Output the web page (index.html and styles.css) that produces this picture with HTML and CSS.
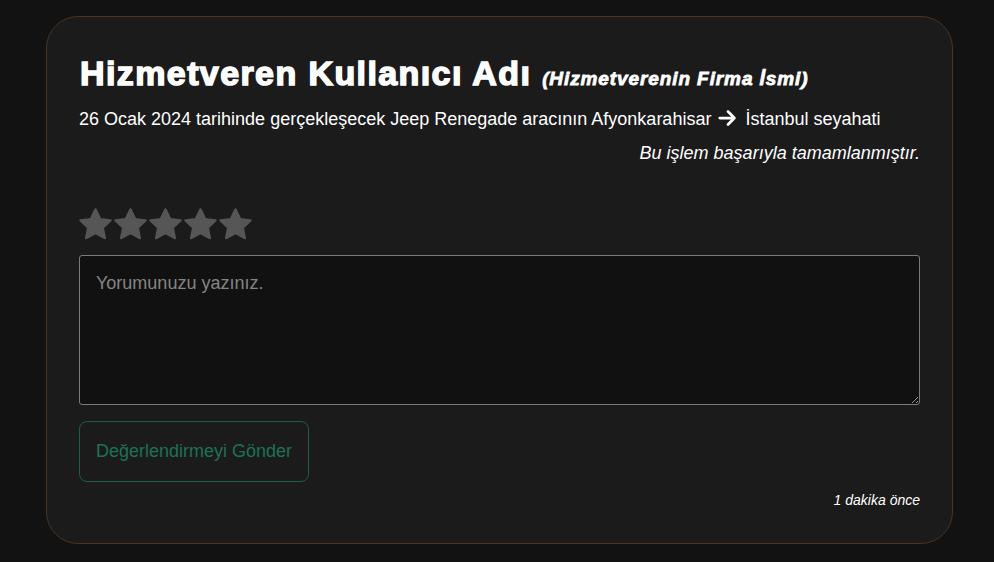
FILE: index.html
```html
<!DOCTYPE html>
<html lang="tr">
<head>
<meta charset="utf-8">
<link rel="stylesheet" href="styles.css">
</head>
<body>
<div class="card">
  <h1 class="title">Hizmetveren Kullanıcı Adı <span class="firm">(Hizmetverenin Firma İsmi)</span></h1>
  <p class="trip">26 Ocak 2024 tarihinde gerçekleşecek Jeep Renegade aracının Afyonkarahisar <svg class="arrow" viewBox="0 0 24 24" width="24" height="22"><path d="M3 12h16M12 5l7 7-7 7" fill="none" stroke="#fff" stroke-width="3" stroke-linecap="round" stroke-linejoin="round"/></svg> İstanbul seyahati</p>
  <p class="status">Bu işlem başarıyla tamamlanmıştır.</p>
  <div class="stars">
    <svg viewBox="1.5 1.5 21 21"><path d="M12 2.5l2.9 6.1 6.6.8-4.9 4.6 1.3 6.6L12 17.3l-5.9 3.3 1.3-6.6-4.9-4.6 6.6-.8z"/></svg>
    <svg viewBox="1.5 1.5 21 21"><path d="M12 2.5l2.9 6.1 6.6.8-4.9 4.6 1.3 6.6L12 17.3l-5.9 3.3 1.3-6.6-4.9-4.6 6.6-.8z"/></svg>
    <svg viewBox="1.5 1.5 21 21"><path d="M12 2.5l2.9 6.1 6.6.8-4.9 4.6 1.3 6.6L12 17.3l-5.9 3.3 1.3-6.6-4.9-4.6 6.6-.8z"/></svg>
    <svg viewBox="1.5 1.5 21 21"><path d="M12 2.5l2.9 6.1 6.6.8-4.9 4.6 1.3 6.6L12 17.3l-5.9 3.3 1.3-6.6-4.9-4.6 6.6-.8z"/></svg>
    <svg viewBox="1.5 1.5 21 21"><path d="M12 2.5l2.9 6.1 6.6.8-4.9 4.6 1.3 6.6L12 17.3l-5.9 3.3 1.3-6.6-4.9-4.6 6.6-.8z"/></svg>
  </div>
  <textarea class="comment" placeholder="Yorumunuzu yazınız."></textarea>
  <button class="send">Değerlendirmeyi Gönder</button>
  <p class="time">1 dakika önce</p>
</div>
</body>
</html>
```
FILE: styles.css
```css
html, body {
  margin: 0;
  padding: 0;
  background: #121212;
  font-family: "Liberation Sans", Arial, sans-serif;
  color: #fff;
}
body {
  padding: 16px 41px 18px 46px;
}
.card {
  background: #1b1b1b;
  border: 1px solid #4a3320;
  border-radius: 32px;
  padding: 34px 32px 34px 32px;
  display: flex;
  flex-direction: column;
}
.title {
  margin: 0 0 0 1px;
  font-size: 34px;
  font-weight: bold;
  -webkit-text-stroke: 1.5px #fff;
  letter-spacing: 1.4px;
  line-height: 44px;
}
.firm {
  font-size: 19px;
  font-style: italic;
  -webkit-text-stroke: 0.8px #fff;
  letter-spacing: 0.9px;
}
.trip {
  margin: 6px 0 0;
  font-size: 18px;
  line-height: 24px;
}
.arrow {
  vertical-align: -4px;
}
.status {
  margin: 11px 0 0;
  text-align: right;
  font-style: italic;
  font-size: 18px;
  line-height: 22px;
}
.stars {
  margin-top: 44px;
  display: flex;
  gap: 2px;
}
.stars svg {
  width: 33px;
  height: 33px;
  fill: #565656;
  stroke: #565656;
  stroke-width: 1.6;
  stroke-linejoin: round;
}
.comment {
  margin-top: 14px;
  height: 150px;
  box-sizing: border-box;
  background: #111;
  border: 1px solid #7a7a7a;
  border-radius: 3px;
  padding: 17px 16px;
  font-family: "Liberation Sans", Arial, sans-serif;
  font-size: 18px;
  color: #ddd;
  resize: vertical;
}
.comment::placeholder {
  color: #858585;
}
.send {
  align-self: flex-start;
  margin-top: 16px;
  width: 230px;
  height: 61px;
  background: transparent;
  border: 1px solid #1c5e47;
  border-radius: 8px;
  color: #1b7355;
  font-family: "Liberation Sans", Arial, sans-serif;
  font-size: 18px;
}
.time {
  margin: 9px 0 0;
  text-align: right;
  font-style: italic;
  font-size: 14px;
  line-height: 18px;
}
```
